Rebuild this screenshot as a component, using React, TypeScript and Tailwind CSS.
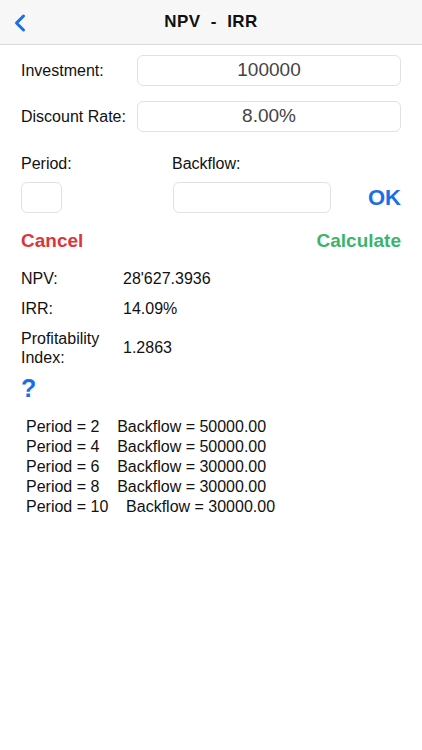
import { ChevronLeft } from 'lucide-react';

const backflows = [
  { period: 2, value: '50000.00' },
  { period: 4, value: '50000.00' },
  { period: 6, value: '30000.00' },
  { period: 8, value: '30000.00' },
  { period: 10, value: '30000.00' },
];

export default function App() {
  return (
    <div
      className="min-h-[750px] w-full bg-white text-[#111]"
      style={{ fontFamily: "'Liberation Sans', Arial, sans-serif" }}
    >
      {/* Nav bar */}
      <div className="relative flex h-[45px] items-center justify-center border-b border-[#d9d9d9] bg-[#f7f7f7]">
        <ChevronLeft className="absolute left-[6px] top-[9px] h-[28px] w-[28px] text-[#1a6ee8]" strokeWidth={2.6} />
        <h1 className="text-[17px] font-bold tracking-wide">NPV&nbsp; -&nbsp; IRR</h1>
      </div>

      <div className="px-[21px]">
        {/* Inputs */}
        <div className="mt-[10px] flex items-center">
          <span className="w-[116px] text-[16px]">Investment:</span>
          <div className="flex h-[31px] flex-1 items-center justify-center rounded-[6px] border border-[#e2e2e2] text-[19px] text-[#444]">
            100000
          </div>
        </div>
        <div className="mt-[15px] flex items-center">
          <span className="w-[116px] text-[16px]">Discount Rate:</span>
          <div className="flex h-[31px] flex-1 items-center justify-center rounded-[6px] border border-[#e2e2e2] text-[19px] text-[#444]">
            8.00%
          </div>
        </div>

        {/* Period / backflow */}
        <div className="mt-[20px] flex text-[16px]">
          <span className="w-[151px]">Period:</span>
          <span>Backflow:</span>
        </div>
        <div className="mt-[5px] flex items-center">
          <div className="h-[31px] w-[41px] rounded-[6px] border border-[#e2e2e2]" />
          <div className="ml-[111px] h-[31px] w-[158px] rounded-[6px] border border-[#e2e2e2]" />
          <span className="ml-auto text-[22px] font-bold text-[#1a6ee8]">OK</span>
        </div>

        <div className="mt-[13px] flex items-center justify-between text-[19px] font-bold">
          <span className="text-[#e0343c]">Cancel</span>
          <span className="text-[#3bb46a]">Calculate</span>
        </div>

        {/* Results */}
        <div className="mt-[13px] flex items-center text-[16px] leading-[20px]">
          <span className="w-[102px]">NPV:</span>
          <span>28'627.3936</span>
        </div>
        <div className="mt-[10px] flex items-center text-[16px] leading-[20px]">
          <span className="w-[102px]">IRR:</span>
          <span>14.09%</span>
        </div>
        <div className="mt-[10px] flex items-center text-[16px]">
          <span className="w-[102px] leading-[19px]">
            Profitability
            <br />
            Index:
          </span>
          <span>1.2863</span>
        </div>

        <div className="mt-[6px] text-[25px] font-bold leading-[30px] text-[#1a6ee8]">?</div>

        {/* Backflow list */}
        <div className="mt-[14px] pl-[5px] text-[16px] leading-[20px]">
          {backflows.map((b) => (
            <div key={b.period} className="whitespace-pre">
              {`Period = ${b.period}    Backflow = ${b.value}`}
            </div>
          ))}
        </div>
      </div>
    </div>
  );
}
